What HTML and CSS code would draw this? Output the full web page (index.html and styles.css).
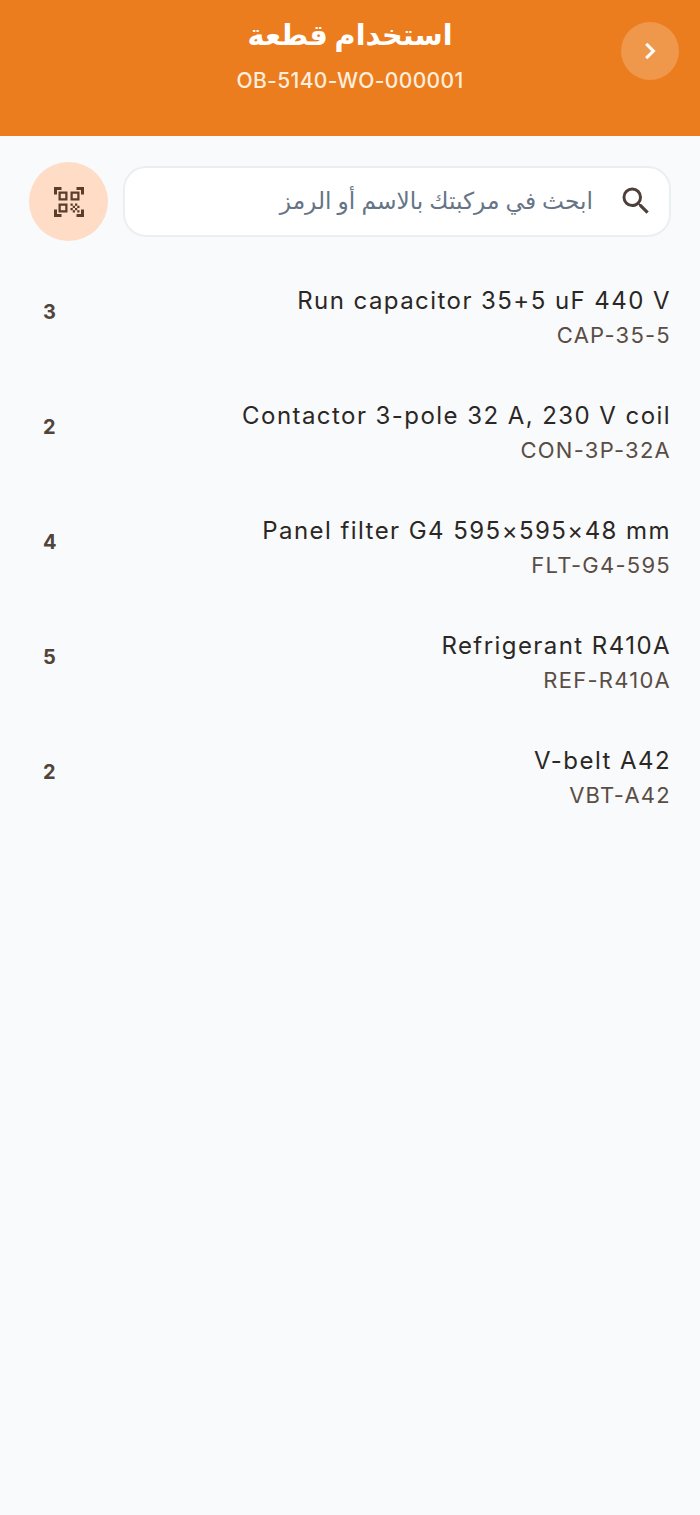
FILE: index.html
```html
<!DOCTYPE html>
<html lang="ar" dir="rtl">
<head>
<meta charset="utf-8">
<title>استخدام قطعة</title>
<link rel="stylesheet" href="styles.css">
</head>
<body>
<header class="app-bar">
  <button class="back" aria-label="back">
    <svg viewBox="0 0 24 24" width="32" height="32"><path fill="#fff" d="M10 6 8.590 7.410 13.170 12l-4.580 4.590L10 18l6-6z" stroke="#fff" stroke-width="0.400"/></svg>
  </button>
  <div class="titles">
    <h1 class="title">استخدام قطعة</h1>
    <p class="subtitle" dir="ltr">OB-5140-WO-000001</p>
  </div>
</header>
<section class="search-row">
  <div class="search">
    <svg class="search-icon" viewBox="0 0 24 24" width="36" height="36"><path fill="#4e4038" d="M15.500 14h-.79l-.28-.27A6.470 6.470 0 0 0 16 9.500 6.500 6.500 0 1 0 9.500 16c1.610 0 3.090-.59 4.230-1.570l.27.28v.79l5 4.990L20.490 19l-4.990-5zm-6 0C7.010 14 5 11.990 5 9.500S7.010 5 9.500 5 14 7.010 14 9.500 11.990 14 9.500 14z"/></svg>
    <span class="placeholder">ابحث في مركبتك بالاسم أو الرمز</span>
  </div>
  <button class="scan" aria-label="scan">
    <svg viewBox="0 0 24 24" width="36" height="36"><path fill="#5b3d2b" d="M9.500 6.500v3h-3v-3h3M11 5H5v6h6V5zm-1.500 9.500v3h-3v-3h3M11 13H5v6h6v-6zm6.500-6.500v3h-3v-3h3M19 5h-6v6h6V5zm-6 8h1.500v1.500H13V13zm1.500 1.500H16V16h-1.500v-1.500zM16 13h1.500v1.500H16V13zm-3 3h1.500v1.500H13V16zm1.500 1.500H16V19h-1.500v-1.500zM16 16h1.500v1.500H16V16zm1.500-1.500H19V16h-1.500v-1.500zm0 3H19V19h-1.500v-1.500zM22 7h-2V4h-3V2h5v5zm0 15v-5h-2v3h-3v2h5zM2 22h5v-2H4v-3H2v5zM2 2v5h2V4h3V2H2z"/></svg>
  </button>
</section>
<ul class="parts">
  <li class="part"><div class="info"><div class="name" dir="ltr">Run capacitor 35+5 uF 440 V</div><div class="code" dir="ltr">CAP-35-5</div></div><div class="qty">3</div></li>
  <li class="part"><div class="info"><div class="name" dir="ltr">Contactor 3-pole 32 A, 230 V coil</div><div class="code" dir="ltr">CON-3P-32A</div></div><div class="qty">2</div></li>
  <li class="part"><div class="info"><div class="name" dir="ltr">Panel filter G4 595×595×48 mm</div><div class="code" dir="ltr">FLT-G4-595</div></div><div class="qty">4</div></li>
  <li class="part"><div class="info"><div class="name" dir="ltr">Refrigerant R410A</div><div class="code" dir="ltr">REF-R410A</div></div><div class="qty">5</div></li>
  <li class="part"><div class="info"><div class="name" dir="ltr">V-belt A42</div><div class="code" dir="ltr">VBT-A42</div></div><div class="qty">2</div></li>
</ul>
</body>
</html>
```
FILE: styles.css
```css
* { box-sizing: border-box; }
html, body { margin: 0; padding: 0; }
body {
  width: 700px;
  min-height: 1515px;
  background: #f8fafc;
  font-family: Inter, "Noto Sans", "DejaVu Sans", sans-serif;
  color: #1f1b18;
}
.app-bar {
  height: 136px;
  background: #ec7d1e;
  display: flex;
  align-items: flex-start;
  padding: 22px 21px 0;
}
.back {
  width: 58px;
  height: 58px;
  border: 0;
  padding: 0;
  border-radius: 50%;
  background: rgba(255, 255, 255, 0.2);
  display: flex;
  align-items: center;
  justify-content: center;
}
.titles {
  flex: 1;
  text-align: center;
  padding-left: 58px;
  margin-top: -8px;
}
.title {
  margin: 0;
  font-size: 28.700px;
  line-height: 42px;
  font-weight: 700;
  color: #fff;
}
.subtitle {
  margin: 12px 0 0;
  font-size: 21px;
  line-height: 26px;
  font-weight: 500;
  letter-spacing: 0.380px;
  color: #fdeedd;
}
.search-row {
  display: flex;
  align-items: center;
  gap: 15px;
  padding: 26px 29px 0;
}
.search {
  width: 549px;
  height: 71px;
  background: #fff;
  border: 2px solid #eaeff4;
  border-radius: 23px;
  display: flex;
  align-items: center;
  gap: 25px;
  padding: 0 15px;
}
.search-icon {
  margin-bottom: 2px;
}
.placeholder {
  font-size: 23.300px;
  margin-bottom: 3px;
  color: #667485;
  font-family: "Noto Sans", "DejaVu Sans", sans-serif;
}
.scan {
  width: 79px;
  height: 79px;
  flex: none;
  border: 0;
  padding: 0;
  border-radius: 50%;
  background: #ffdcc6;
  display: flex;
  align-items: center;
  justify-content: center;
}
.parts {
  list-style: none;
  margin: 0;
  padding: 21px 29px 0 43px;
}
.part {
  height: 115px;
  display: flex;
  align-items: center;
  justify-content: space-between;
  padding-bottom: 8px;
}
.name {
  font-size: 24px;
  line-height: 38px;
  letter-spacing: 1.440px;
  text-align: right;
  color: #2b2724;
}
.code {
  font-size: 22px;
  line-height: 30px;
  letter-spacing: 1.250px;
  text-align: right;
  color: #5a4d44;
}
.qty {
  font-size: 20px;
  font-weight: 700;
  margin-bottom: 7px;
  color: #51443b;
}
```
